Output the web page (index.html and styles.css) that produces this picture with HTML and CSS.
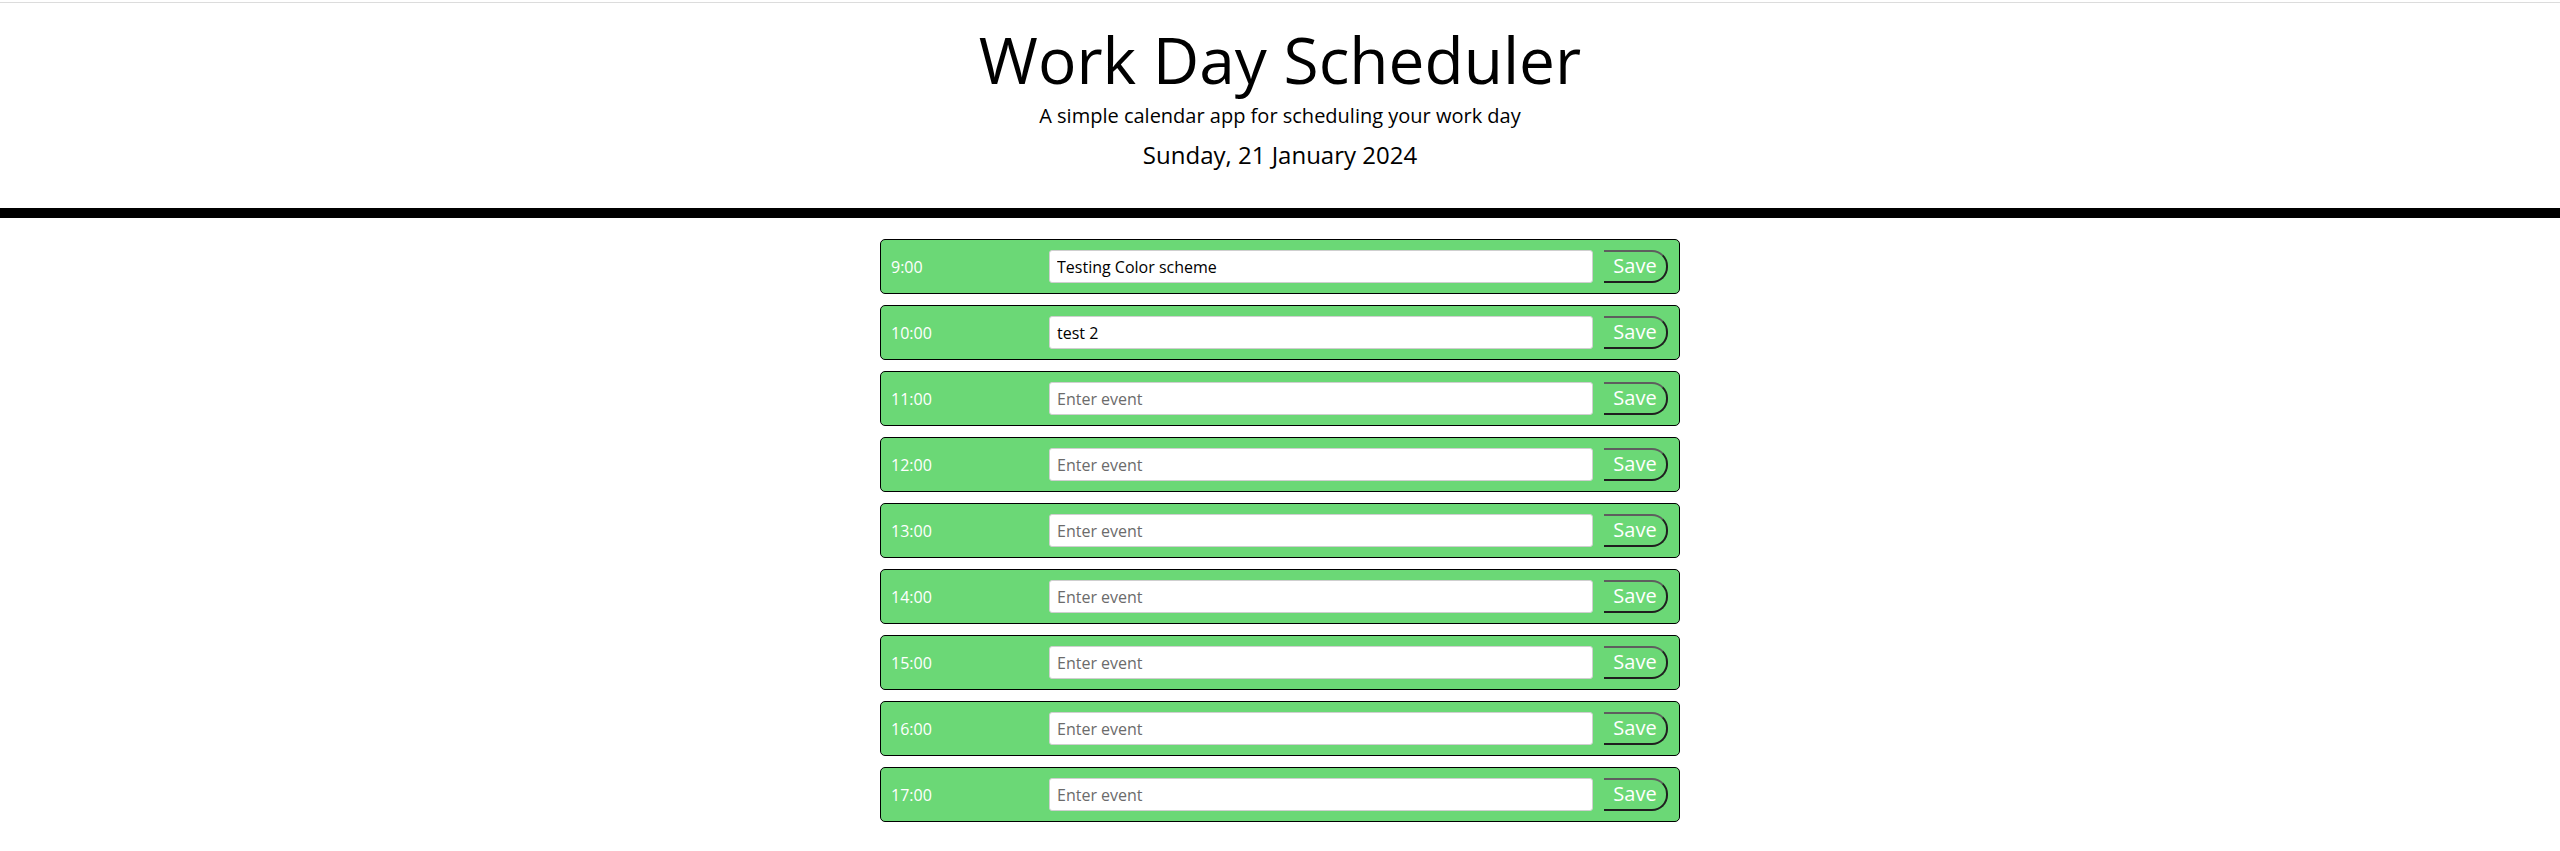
FILE: index.html
```html
<!DOCTYPE html>
<html lang="en">
<head>
<meta charset="utf-8">
<title>Work Day Scheduler</title>
<link rel="stylesheet" href="styles.css">
</head>
<body>
<header class="jumbotron">
  <h1 class="title">Work Day Scheduler</h1>
  <p class="lead">A simple calendar app for scheduling your work day</p>
  <p class="current-day">Sunday, 21 January 2024</p>
</header>
<main class="container">
  <div class="time-block"><div class="hour">9:00</div><input class="description" type="text" placeholder="Enter event" value="Testing Color scheme"><button class="save-btn">Save</button></div>
  <div class="time-block"><div class="hour">10:00</div><input class="description" type="text" placeholder="Enter event" value="test 2"><button class="save-btn">Save</button></div>
  <div class="time-block"><div class="hour">11:00</div><input class="description" type="text" placeholder="Enter event"><button class="save-btn">Save</button></div>
  <div class="time-block"><div class="hour">12:00</div><input class="description" type="text" placeholder="Enter event"><button class="save-btn">Save</button></div>
  <div class="time-block"><div class="hour">13:00</div><input class="description" type="text" placeholder="Enter event"><button class="save-btn">Save</button></div>
  <div class="time-block"><div class="hour">14:00</div><input class="description" type="text" placeholder="Enter event"><button class="save-btn">Save</button></div>
  <div class="time-block"><div class="hour">15:00</div><input class="description" type="text" placeholder="Enter event"><button class="save-btn">Save</button></div>
  <div class="time-block"><div class="hour">16:00</div><input class="description" type="text" placeholder="Enter event"><button class="save-btn">Save</button></div>
  <div class="time-block"><div class="hour">17:00</div><input class="description" type="text" placeholder="Enter event"><button class="save-btn">Save</button></div>
</main>
</body>
</html>
```
FILE: styles.css
```css
* { box-sizing: border-box; }

body {
  margin: 0;
  font-family: "Open Sans", "DejaVu Sans", sans-serif;
  color: #000;
  background: #fff;
}

.jumbotron {
  margin-top: 2px;
  border-top: 1px solid #dcdcdc;
  border-bottom: 10px solid #000;
  padding: 25px 0 41px;
  text-align: center;
}

.title {
  margin: 0;
  font-size: 64px;
  line-height: 64px;
  font-weight: 400;
}

.lead {
  margin: 14px 0 0;
  font-size: 20px;
  line-height: 20px;
}

.current-day {
  margin: 17px 0 0;
  font-size: 24px;
  line-height: 24px;
}

.container {
  width: 800px;
  margin: 21px auto 0;
  display: flex;
  flex-direction: column;
  gap: 11px;
}

.time-block {
  height: 55px;
  display: flex;
  align-items: center;
  background: #6bd876;
  border: 1px solid #000;
  border-radius: 5px;
  padding: 0 11px 0 10px;
}

.hour {
  width: 158px;
  color: #fff;
  font-size: 16px;
}

.description {
  flex: 1;
  height: 33px;
  margin-right: 11px;
  border: 1px solid #cfcfcf;
  border-radius: 3px;
  padding: 0 7px;
  font-family: "Open Sans", "DejaVu Sans", sans-serif;
  font-size: 16px;
  color: #000;
  background: #fff;
  outline: none;
}

.description::placeholder {
  color: #6b6b6b;
}

.save-btn {
  width: 64px;
  height: 33px;
  padding: 0 0 1px;
  background: transparent;
  color: #fff;
  font-family: "Open Sans", "DejaVu Sans", sans-serif;
  font-size: 20px;
  line-height: 1;
  border-left: none;
  border-top: 2px solid #5e5e5e;
  border-right: 2px solid #1f1f1f;
  border-bottom: 2px solid #1f1f1f;
  border-radius: 0 16px 16px 0;
}
```
